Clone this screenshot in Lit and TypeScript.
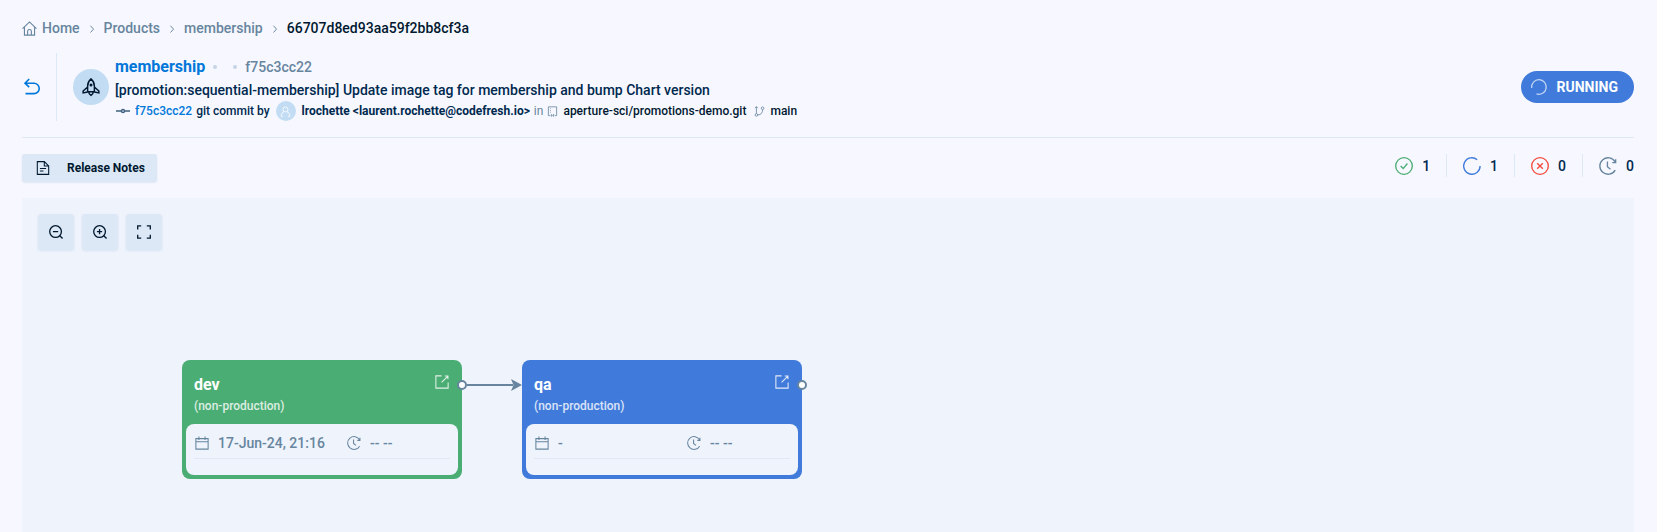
import { LitElement, html, css, svg, nothing } from "lit";
import { customElement, property } from "lit/decorators.js";

const shapes: Record<string, unknown> = {
  home: svg`<path d="M.6 8.200 8 1l7.400 7.200M2.600 6.600V15h10.800V6.600M6 14.800V11a2 2 0 0 1 4 0v3.800"/>`,
  chevron: svg`<path d="m6 5 4 4.500L6 14"/>`,
  back: svg`<path d="M5.2 0 1 4.2l4.200 4M1.200 4.200h8.800a5.200 5.200 0 0 1 0 10.400H1.500"/>`,
  rocket: svg`<path d="M8 .8C5.900 2.600 5 4.600 5 7v5.200h6V7c0-2.400-.9-4.400-3-6.200ZM5 8 1 11.600v1.600l4-.8M11 8l4 3.600v1.600l-4-.8M6 12.400c0 1.400 1 2.400 2 3 1-.6 2-1.600 2-3"/><circle cx="8" cy="6.200" r=".7"/>`,
  commit: svg`<path d="M1 8h5M10 8h5"/><circle cx="8" cy="8" r="1.500"/>`,
  user: svg`<circle cx="8" cy="5" r="3.600"/><path d="M1.800 15v-1.500c0-2.500 2-4 4-5M14.200 15v-1.500c0-2.500-2-4-4-5M1.800 15h2.400M11.800 15h2.400"/>`,
  repo: svg`<path d="M2 14V1.200h12V14h-2.500M2 14h2.500M5 3.500v1M5 6v1M5 8.500v1M6.300 11.600V15L8 13.700 9.700 15v-3.400"/>`,
  branch: svg`<circle cx="3.500" cy="13" r="1.900"/><circle cx="12.500" cy="3.200" r="1.900"/><path d="M3.500 11V1M1.400 3l2.100-2 2 2M5.400 13c5 0 7.100-3 7.100-7.800"/>`,
  note: svg`<path d="M1.500 .7h8L14.500 5.700V15.300h-13V.7ZM9.500 .7v5h5M4.500 8.500h7M4.500 11.500h4"/>`,
  minus: svg`<circle cx="7.500" cy="7.500" r="6.700"/><path d="m12 12 3.500 3.500M4.500 7.500h6"/>`,
  plus: svg`<circle cx="7.500" cy="7.500" r="6.700"/><path d="m12 12 3.500 3.500M4.500 7.500h6M7.500 4.500v6"/>`,
  expand: svg`<path d="M.8 5V1h4M11.200 1h4v4M15.200 11v4h-4M4.800 15h-4v-4"/>`,
  check: svg`<circle cx="8" cy="8" r="7.400"/><path d="m5 8 2.300 2.300L11 5.800"/>`,
  cross: svg`<circle cx="8" cy="8" r="7.400"/><path d="m5.500 5.500 5 5M10.500 5.500l-5 5"/>`,
  arc: svg`<path d="M12.600 2.400A7.300 7.300 0 1 0 15.200 8"/>`,
  spinner: svg`<path d="M.7 9A7.300 7.300 0 1 1 5.500 14.900"/>`,
  clock: svg`<path d="M14.400 4.400A7.300 7.300 0 1 0 14.400 11.600M14.800 2v3h-3M7.500 4v4.600l2.700 2.200"/>`,
  calendar: svg`<path d="M1 3h14v12H1ZM1 6.600h14M4.500 .6v4M11.500 .6v4"/>`,
  open: svg`<path d="M7.500 1H1v14h14V8.500M7.500 8.500 14.500 1.500M11.200 1.200h3.600v3.600"/>`,
};

@customElement("ui-icon")
export class UiIcon extends LitElement {
  @property() name = "";
  @property({ type: Number }) size = 16;
  @property({ type: Number }) weight = 1.2;

  static styles = css`
    :host { display: inline-flex; flex: none; }
    svg { display: block; fill: none; stroke: currentColor; overflow: visible; }
  `;

  render() {
    return html`<svg width=${this.size} height=${this.size} viewBox="0 0 16 16"
      stroke-width=${this.weight} aria-hidden="true">${shapes[this.name] ?? nothing}</svg>`;
  }
}

@customElement("environment-node")
export class EnvironmentNode extends LitElement {
  @property() label = "";
  @property() status = "";
  @property() date = "";

  static styles = css`
    :host { display: block; width: 280px; }
    .card { position: relative; box-sizing: border-box; padding: 4px; border-radius: 8px; color: #fff; }
    .done { background: #4aad73; }
    .running { background: #407bdb; }
    .head { display: flex; justify-content: space-between; padding: 10px 8px 8px; }
    .name { margin: 0; font-size: 16px; line-height: 22px; font-weight: 700; }
    .kind { margin: 0; font-size: 12px; line-height: 20px; font-weight: 500; opacity: 0.8; }
    .open { display: flex; height: 14px; padding: 1px 1px 0 0; color: #fff; opacity: 0.85; }
    .body { border-radius: 8px; background: #eef3fc; padding: 4px 8px 16px; color: #67859e; }
    .times { display: flex; height: 30px; align-items: center; border-bottom: 1px solid #e1e8f5; font-size: 14px; font-weight: 500; }
    .time { display: flex; align-items: center; gap: 9px; padding-left: 1px; }
    .date { flex: 0 0 151px; }
    .handle { position: absolute; right: -5px; top: 20px; box-sizing: border-box; width: 10px; height: 10px; border: 2px solid #67859e; border-radius: 50%; background: #fff; }
  `;

  render() {
    return html`<article class="card ${this.status}">
      <div class="head">
        <div><h3 class="name">${this.label}</h3><p class="kind">(non-production)</p></div>
        <a class="open" href="#${this.label}" aria-label="Open ${this.label}"><ui-icon name="open" size="14"></ui-icon></a>
      </div>
      <div class="body"><div class="times">
        <span class="time date"><ui-icon name="calendar" size="14"></ui-icon>${this.date}</span>
        <span class="time"><ui-icon name="clock" size="14"></ui-icon>-- --</span>
      </div></div>
      <span class="handle"></span>
    </article>`;
  }
}

@customElement("app-root")
export class AppRoot extends LitElement {
  static styles = css`
    :host { display: block; background: #f7f8ff; color: #00294f; font-family: Roboto, "Liberation Sans", sans-serif; font-size: 14px; line-height: 20px; }
    a { color: inherit; text-decoration: none; }
    button { border: 0; border-radius: 3px; background: #dce8f6; color: #00182f; font: inherit; box-shadow: 0 1px 2px #c8d8ea80; cursor: pointer; }
    .page { display: flex; flex-direction: column; min-height: 100vh; box-sizing: border-box; padding: 18px 23px 0 22px; }
    .crumbs { display: flex; align-items: center; gap: 6px; color: #67859e; font-weight: 500; }
    .home { display: flex; align-items: center; gap: 5px; }
    .current { color: #00182f; }
    .header { display: flex; align-items: center; padding: 15px 0 16px; border-bottom: 1px solid #dce8f6; }
    .back { display: flex; align-items: center; height: 68px; padding: 0 16px 0 2px; margin-right: 16px; border-right: 1px solid #dce8f6; color: #0077d9; }
    .avatar { display: grid; place-items: center; flex: none; width: 36px; height: 36px; margin-right: 6px; border-radius: 50%; background: #c2dcf3; color: #00182f; }
    .info { flex: 1; min-width: 0; padding-top: 2px; }
    .row { display: flex; align-items: center; height: 24px; }
    .product { color: #0077d9; font-size: 16px; font-weight: 700; }
    .dot { width: 4px; height: 4px; margin-left: 8px; border-radius: 50%; background: #c5d5e5; }
    .dot + .dot { margin: 0 8px 0 16px; }
    .sha { color: #67859e; font-weight: 500; }
    .title { margin: 0; font-size: 14px; line-height: 22px; font-weight: 500; }
    .commit { display: flex; align-items: center; height: 20px; gap: 4px; font-size: 12px; font-weight: 500; white-space: nowrap; }
    .commit-icon { color: #3f607f; }
    .link { color: #0077d9; }
    .face { display: grid; place-items: center; width: 20px; height: 20px; margin: 0 2px; border-radius: 50%; background: #c2dcf3; color: #fff; }
    .author { font-weight: 700; }
    .muted { color: #67859e; font-weight: 400; }
    .repo { display: flex; align-items: center; gap: 5px; color: #00182f; }
    .repo ui-icon { color: #67859e; }
    .repo + .repo { margin-left: 4px; }
    .status { display: flex; align-items: center; gap: 10px; box-sizing: border-box; height: 32px; padding: 0 16px 0 10px; border-radius: 16px; background: #407bdb; color: #fff; font-weight: 700; }
    .status ui-icon { opacity: 0.7; }
    .toolbar { display: flex; justify-content: space-between; align-items: flex-start; padding: 16px 0; }
    .notes { display: flex; align-items: center; gap: 17px; height: 28px; padding: 0 12px 0 14px; font-size: 12px; font-weight: 700; }
    .stats { display: flex; list-style: none; margin: 0; padding: 0; font-weight: 500; }
    .stat { display: flex; align-items: center; gap: 9px; height: 23px; padding: 0 16px; border-right: 1px solid #dce8f6; }
    .stat:last-child { padding-right: 0; border: 0; }
    .green { color: #4aad73; }
    .blue { color: #407bdb; }
    .red { color: #f3493d; }
    .slate { color: #67859e; }
    .canvas { position: relative; flex: 1; min-height: 320px; background: #eef3fc; overflow: hidden; }
    .zoom { display: flex; gap: 8px; padding: 16px; }
    .tool { display: grid; place-items: center; width: 36px; height: 36px; padding: 0; }
    .node { position: absolute; top: 162px; }
    .dev { left: 160px; }
    .qa { left: 500px; }
    .edge { position: absolute; left: 445px; top: 180px; }
  `;

  private stats = [
    { icon: "check", tone: "green", count: 1, label: "Succeeded" },
    { icon: "arc", tone: "blue", count: 1, label: "Running" },
    { icon: "cross", tone: "red", count: 0, label: "Failed" },
    { icon: "clock", tone: "slate", count: 0, label: "Pending" },
  ];

  private tools = [
    { icon: "minus", label: "Zoom out" },
    { icon: "plus", label: "Zoom in" },
    { icon: "expand", label: "Fit to screen" },
  ];

  render() {
    const chevron = html`<ui-icon name="chevron" size="12" weight="1.300"></ui-icon>`;
    return html`<main class="page">
      <nav class="crumbs" aria-label="Breadcrumb">
        <a class="home" href="#home"><ui-icon name="home" size="15"></ui-icon>Home</a>${chevron}
        <a href="#products">Products</a>${chevron}
        <a href="#membership">membership</a>${chevron}
        <span class="current" aria-current="page">66707d8ed93aa59f2bb8cf3a</span>
      </nav>
      <header class="header">
        <a class="back" href="#products" aria-label="Back"><ui-icon name="back" size="16" weight="1.6"></ui-icon></a>
        <span class="avatar"><ui-icon name="rocket" size="18" weight="1.3"></ui-icon></span>
        <div class="info">
          <div class="row"><a class="product" href="#membership">membership</a><span class="dot"></span><span class="dot"></span><span class="sha">f75c3cc22</span></div>
          <h1 class="title">[promotion:sequential-membership] Update image tag for membership and bump Chart version</h1>
          <div class="commit">
            <ui-icon class="commit-icon" name="commit" size="16" weight="1.4"></ui-icon>
            <a class="link" href="#commit">f75c3cc22</a><span>git commit by</span>
            <span class="face"><ui-icon name="user" size="11"></ui-icon></span>
            <span class="author">lrochette &lt;laurent.rochette@codefresh.io&gt;</span>
            <span class="muted">in</span>
            <span class="repo"><ui-icon name="repo" size="11"></ui-icon>aperture-sci/promotions-demo.git</span>
            <span class="repo"><ui-icon name="branch" size="11"></ui-icon>main</span>
          </div>
        </div>
        <span class="status"><ui-icon name="spinner" size="16"></ui-icon>RUNNING</span>
      </header>
      <div class="toolbar">
        <button class="notes"><ui-icon name="note" size="14"></ui-icon>Release Notes</button>
        <ul class="stats">${this.stats.map((s) => html`<li class="stat" aria-label=${s.label}>
          <ui-icon class=${s.tone} name=${s.icon} size="18"></ui-icon>${s.count}</li>`)}</ul>
      </div>
      <section class="canvas" aria-label="Promotion flow">
        <div class="zoom">${this.tools.map((t) => html`<button class="tool" aria-label=${t.label}>
          <ui-icon name=${t.icon} size="14" weight="1.5"></ui-icon></button>`)}</div>
        <svg class="edge" width="56" height="14" viewBox="0 0 56 14" aria-hidden="true">
          <path d="M0 7h46" stroke="#67859e" stroke-width="2"/><path d="M44 1 55 7 44 13l2.500-6Z" fill="#67859e"/>
        </svg>
        <environment-node class="node dev" label="dev" status="done" date="17-Jun-24, 21:16"></environment-node>
        <environment-node class="node qa" label="qa" status="running" date="-"></environment-node>
      </section>
    </main>`;
  }
}
